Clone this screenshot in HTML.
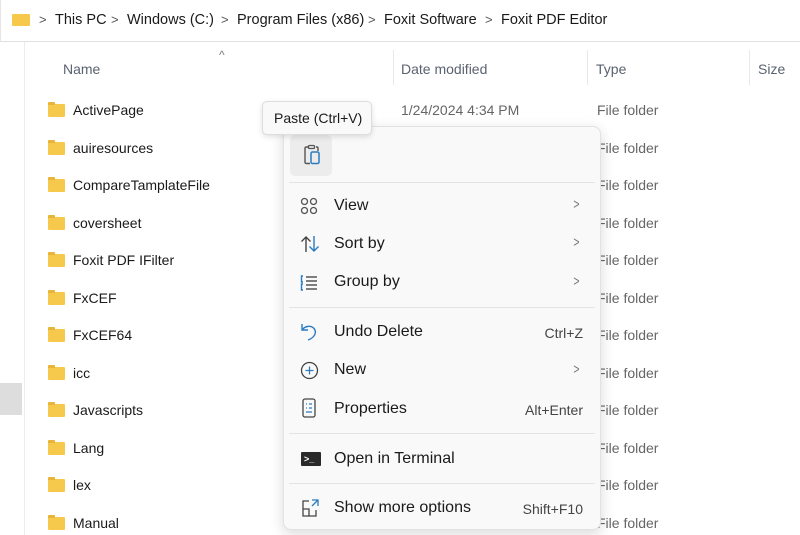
<!DOCTYPE html>
<html><head><style>
*{margin:0;padding:0;box-sizing:border-box}
body{width:800px;height:535px;overflow:hidden;background:#fff;font-family:"Liberation Sans",sans-serif;color:#1a1a1a;position:relative}
.abs{position:absolute}
.addr{left:0;top:0;width:800px;height:42px;border-bottom:1px solid #e0e0e0;border-left:1px solid #e5e5e5}
.crumb{top:12px;font-size:14.5px;color:#1a1a1a}
.sep{top:12px;font-size:13px;color:#555}
.hdr{top:61px;font-size:14px;color:#5a6270}
.col{top:50px;width:1px;height:35px;background:#e8e8e8}
.row{left:48px;font-size:14px;height:20px;display:flex;align-items:center}
.fold{width:17px;height:13px;background:#f6c84b;border-radius:1px;margin-right:8px;position:relative}
.fold:before{content:"";position:absolute;left:0;top:-2px;width:7px;height:3px;background:#e8b53a;border-radius:1px 1px 0 0}
.date{left:401px;font-size:14px;color:#666}
.type{left:597px;font-size:14px;color:#666}
.menu{left:283px;top:126px;width:318px;height:404px;background:#f9f9f9;border:1px solid #e2e2e2;border-radius:8px;box-shadow:0 4px 14px rgba(0,0,0,.15)}
.mi{position:absolute;left:50px;font-size:16px;color:#1a1a1a}
.sc{position:absolute;right:17px;font-size:14px;color:#444}
.ch{position:absolute;left:288px;font-size:15px;color:#777;transform:scaleX(.7)}
.hr{position:absolute;left:5px;right:5px;height:1px;background:#e3e3e3}
.ic{position:absolute;left:16px}
</style></head><body>
<div class="abs addr"></div>
<div class="abs" style="left:12px;top:14px;width:18px;height:12px;background:#f6c84b;border-radius:1px"></div>
<div class="abs sep" style="left:39px">&gt;</div>
<div class="abs crumb" style="left:55px">This PC</div>
<div class="abs sep" style="left:111px">&gt;</div>
<div class="abs crumb" style="left:127px">Windows (C:)</div>
<div class="abs sep" style="left:221px">&gt;</div>
<div class="abs crumb" style="left:237px">Program Files (x86)</div>
<div class="abs sep" style="left:368px">&gt;</div>
<div class="abs crumb" style="left:384px">Foxit Software</div>
<div class="abs sep" style="left:485px">&gt;</div>
<div class="abs crumb" style="left:501px">Foxit PDF Editor</div>
<div class="abs" style="left:24px;top:42px;width:1px;height:493px;background:#ececec"></div>
<div class="abs" style="left:0;top:383px;width:22px;height:32px;background:#ddd"></div>
<div class="abs" style="left:219px;top:48px;font-size:12px;color:#777">^</div>
<div class="abs hdr" style="left:63px">Name</div>
<div class="abs col" style="left:393px"></div>
<div class="abs hdr" style="left:401px">Date modified</div>
<div class="abs col" style="left:587px"></div>
<div class="abs hdr" style="left:596px">Type</div>
<div class="abs col" style="left:749px"></div>
<div class="abs hdr" style="left:758px">Size</div>

<div class="abs row" style="top:100px"><span class="fold"></span>ActivePage</div>
<div class="abs row" style="top:138px"><span class="fold"></span>auiresources</div>
<div class="abs row" style="top:175px"><span class="fold"></span>CompareTamplateFile</div>
<div class="abs row" style="top:213px"><span class="fold"></span>coversheet</div>
<div class="abs row" style="top:250px"><span class="fold"></span>Foxit PDF IFilter</div>
<div class="abs row" style="top:288px"><span class="fold"></span>FxCEF</div>
<div class="abs row" style="top:325px"><span class="fold"></span>FxCEF64</div>
<div class="abs row" style="top:363px"><span class="fold"></span>icc</div>
<div class="abs row" style="top:400px"><span class="fold"></span>Javascripts</div>
<div class="abs row" style="top:438px"><span class="fold"></span>Lang</div>
<div class="abs row" style="top:475px"><span class="fold"></span>lex</div>
<div class="abs row" style="top:513px"><span class="fold"></span>Manual</div>
<div class="abs date" style="top:102px">1/24/2024 4:34 PM</div>
<div class="abs type" style="top:102px">File folder</div>
<div class="abs type" style="top:140px">File folder</div>
<div class="abs type" style="top:177px">File folder</div>
<div class="abs type" style="top:215px">File folder</div>
<div class="abs type" style="top:252px">File folder</div>
<div class="abs type" style="top:290px">File folder</div>
<div class="abs type" style="top:327px">File folder</div>
<div class="abs type" style="top:365px">File folder</div>
<div class="abs type" style="top:402px">File folder</div>
<div class="abs type" style="top:440px">File folder</div>
<div class="abs type" style="top:477px">File folder</div>
<div class="abs type" style="top:515px">File folder</div>

<div class="abs menu">
<div style="position:absolute;left:6px;top:8px;width:42px;height:41px;background:#ececec;border-radius:5px"></div>
<svg class="ic" style="left:18px;top:17px" width="20" height="22" viewBox="0 0 20 22"><path d="M6 3H4.5Q3 3 3 4.5V18Q3 19.5 4.5 19.5H8" fill="none" stroke="#555" stroke-width="1.4"/><rect x="6.5" y="1.5" width="6" height="3" rx="1" fill="none" stroke="#555" stroke-width="1.3"/><path d="M14 3H15Q16 3 16 4.5V7" fill="none" stroke="#555" stroke-width="1.4"/><rect x="9" y="8" width="8" height="11.5" rx="1.5" fill="none" stroke="#2b7bc0" stroke-width="1.5"/></svg>
<div class="hr" style="top:55px"></div>
<svg class="ic" style="top:70px" width="18" height="18" viewBox="0 0 18 18" fill="none" stroke="#555" stroke-width="1.3"><circle cx="4.5" cy="4.5" r="3"/><circle cx="13.5" cy="4.5" r="3"/><circle cx="4.5" cy="13.5" r="3"/><circle cx="13.5" cy="13.5" r="3"/></svg>
<div class="mi" style="top:70px">View</div><div class="ch" style="top:69px">&gt;</div>
<svg class="ic" style="top:108px" width="20" height="18" viewBox="0 0 20 18" fill="none" stroke-width="1.4"><path d="M6 17V2M1.5 6.5L6 2l4.5 4.5" stroke="#444"/><path d="M14 1v15M9.5 11.5L14 16l4.5-4.5" stroke="#2b7bc0"/></svg>
<div class="mi" style="top:108px">Sort by</div><div class="ch" style="top:107px">&gt;</div>
<svg class="ic" style="top:147px" width="18" height="18" viewBox="0 0 18 18" fill="none" stroke-width="1.4"><path d="M6 3h11M6 7h11M6 11h11M6 15h11" stroke="#555"/><path d="M3 2H1.5v6H3M3 10H1.5v6H3" stroke="#2b7bc0"/></svg>
<div class="mi" style="top:146px">Group by</div><div class="ch" style="top:146px">&gt;</div>
<div class="hr" style="top:180px"></div>
<svg class="ic" style="top:195px" width="18" height="20" viewBox="0 0 18 20" fill="none" stroke="#2b7bc0" stroke-width="1.4"><path d="M2 2v6h6"/><path d="M2.5 7.5C5 4 11 3 14 6.5s1 9-6 11.5"/></svg>
<div class="mi" style="top:196px">Undo Delete</div><div class="sc" style="top:198px">Ctrl+Z</div>
<svg class="ic" style="top:234px" width="19" height="19" viewBox="0 0 19 19" fill="none" stroke="#444" stroke-width="1.3"><circle cx="9.5" cy="9.5" r="8"/><path d="M9.5 5.5v8M5.5 9.5h8" stroke="#2b7bc0"/></svg>
<div class="mi" style="top:234px">New</div><div class="ch" style="top:234px">&gt;</div>
<svg class="ic" style="top:271px" width="18" height="20" viewBox="0 0 18 20" fill="none" stroke="#444" stroke-width="1.3"><rect x="3" y="1" width="12" height="18" rx="2"/><path d="M6 6h1M6 10h1M9 6h3M9 10h3M6 14h6" stroke="#2b7bc0"/></svg>
<div class="mi" style="top:273px">Properties</div><div class="sc" style="top:275px">Alt+Enter</div>
<div class="hr" style="top:306px"></div>
<div style="position:absolute;left:17px;top:325px;width:20px;height:14px;background:#2a2a2a;border-radius:1px"></div>
<div style="position:absolute;left:20px;top:327px;color:#fff;font-size:9px;font-weight:bold">&gt;_</div>
<div class="mi" style="top:323px">Open in Terminal</div>
<div class="hr" style="top:356px"></div>
<svg class="ic" style="top:371px" width="20" height="20" viewBox="0 0 20 20" fill="none" stroke="#444" stroke-width="1.3"><path d="M9 3H3v15h13v-6"/><path d="M3 11h6v7"/><path d="M12 2h6v6M18 2l-6 6" stroke="#2b7bc0"/></svg>
<div class="mi" style="top:372px">Show more options</div><div class="sc" style="top:374px">Shift+F10</div>
</div>
<div class="abs" style="left:262px;top:101px;width:110px;height:34px;background:#f9f9f9;border:1px solid #ddd;border-radius:5px;box-shadow:0 2px 6px rgba(0,0,0,.12);font-size:14px;padding:8px 0 0 11px">Paste (Ctrl+V)</div>
</body></html>
